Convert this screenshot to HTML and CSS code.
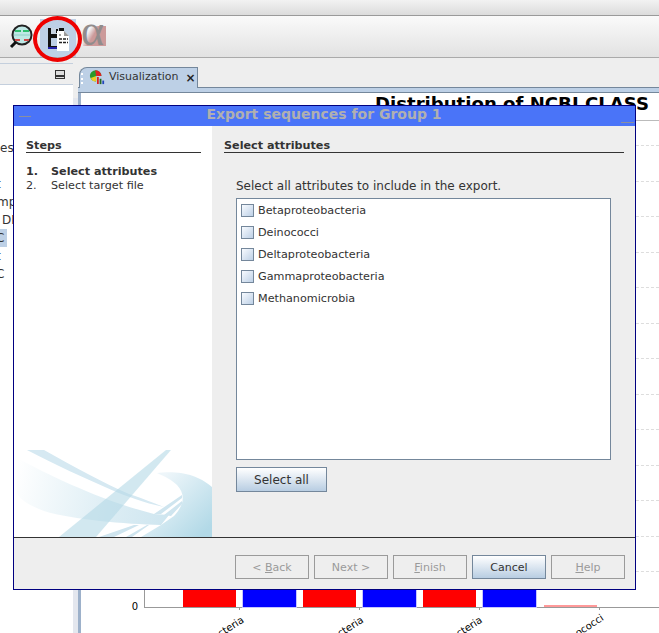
FILE: index.html
```html
<!DOCTYPE html>
<html lang="en">
<head>
  <meta charset="UTF-8">
  <title>Export sequences for Group 1</title>
  <link rel="stylesheet" href="styles.css">
</head>
<body>
  <div class="top-strip"></div>
  <div class="toolbar">
    <button class="tool-btn">
      <svg width="26" height="26" viewBox="0 0 26 26">
        <circle cx="13" cy="10" r="9.500" fill="#bfe9e6" stroke="#222" stroke-width="2"/>
        <path d="M6 6h14" stroke="#2fbf6f" stroke-width="2" stroke-dasharray="6 2"/>
        <path d="M5 10h16" stroke="#8fd0c8" stroke-width="1"/>
        <path d="M6 15h14" stroke="#d04a4a" stroke-width="2" stroke-dasharray="5 4"/>
        <path d="M7 17l-5 5" stroke="#111" stroke-width="3"/>
      </svg>
    </button>
    <button class="tool-btn tool-btn-active">
      <svg width="24" height="26" viewBox="0 0 24 26">
        <path d="M2 1h16v21H2z" fill="#111"/>
        <path d="M5 1h8v6H5z" fill="#c6d3e2"/>
        <path d="M10 2h2v4h-2z" fill="#111"/>
        <path d="M5 11h10v8H5z" fill="#bdd0e6"/>
        <path d="M2 20h14v2H2z" fill="#2222aa"/>
        <path d="M11 4h7l5 5v15H11z" fill="#fff"/>
        <path d="M18 4v5h5z" fill="#9a9a9a"/>
        <path d="M13 8h2" stroke="#444"/>
        <path d="M13 12h9M13 15.500h9" stroke="#222" stroke-width="1.500" stroke-dasharray="3 1"/>
      </svg>
    </button>
    <button class="tool-btn">
      <svg width="26" height="26" viewBox="0 0 26 26">
        <defs>
          <linearGradient id="alpha-bg" x1="0" y1="0" x2="1" y2="0.5">
            <stop offset="0.3" stop-color="#cc9a9a" stop-opacity="0"/>
            <stop offset="0.55" stop-color="#cc9a9a"/>
          </linearGradient>
        </defs>
        <rect x="2" y="1" width="23" height="20" fill="url(#alpha-bg)"/>
        <text x="0" y="20" class="alpha">α</text>
      </svg>
    </button>
  </div>
  <div class="red-ring"></div>

  <div class="workspace">
    <div class="side-panel">
      <div class="panel-head"><span class="min-icon"></span></div>
      <div class="tree">
        <div class="tree-row">es</div>
        <div class="tree-row"></div>
        <div class="tree-row tree-tail">t</div>
        <div class="tree-row tree-mid">mp</div>
        <div class="tree-row tree-dn">DN</div>
        <div class="tree-row tree-sel"><span>C</span></div>
        <div class="tree-row tree-tail">t</div>
        <div class="tree-row tree-tail">C</div>
      </div>
    </div>
    <div class="main-panel">
      <div class="tab-bar">
        <div class="tab">
          <span class="grip"></span>
          <svg width="16" height="16" viewBox="0 0 18 18">
            <path d="M1 8a6.500 6.500 0 0 1 13 0H8v6A6.500 6.500 0 0 1 1 8z" fill="#2a9a2a"/>
            <path d="M7 1.500a6.500 6.500 0 0 1 7 6.500H8z" fill="#d22"/>
            <path d="M2 10l6-2v6a6 6 0 0 1-6-4z" fill="#ec2"/>
            <path d="M9 9h2v8H9z" fill="#d22"/>
            <path d="M12 11h2v6h-2z" fill="#262"/>
            <path d="M15 13h2v4h-2z" fill="#24b"/>
          </svg>
          <span class="tab-label">Visualization</span>
          <span class="tab-close">×</span>
        </div>
      </div>
      <div class="tab-rule"></div>
      <div class="chart">
        <div class="chart-title">Distribution of NCBI CLASS</div>
        <div class="gridlines">
          <div class="gridline"></div><div class="gridline"></div><div class="gridline"></div>
          <div class="gridline"></div><div class="gridline"></div><div class="gridline"></div>
          <div class="gridline"></div><div class="gridline"></div><div class="gridline"></div>
          <div class="gridline"></div><div class="gridline"></div><div class="gridline"></div>
          <div class="gridline"></div>
        </div>
        <div class="chart-foot">
          <div class="y-zero">0</div>
          <div class="plot">
            <div class="bar red"></div><div class="bar blue"></div>
            <div class="bar red"></div><div class="bar blue"></div>
            <div class="bar red"></div><div class="bar blue"></div>
            <div class="bar pink"></div>
          </div>
        </div>
        <div class="x-labels">
          <div class="ticks">
            <span class="tick"></span><span class="tick"></span><span class="tick"></span><span class="tick"></span>
          </div>
          <span class="x-label x-label-1">Betaproteobacteria</span>
          <span class="x-label x-label-2">Deltaproteobacteria</span>
          <span class="x-label x-label-3">Gammaproteobacteria</span>
          <span class="x-label x-label-4">Deinococci</span>
        </div>
      </div>
    </div>
  </div>

  <div class="dialog">
    <div class="dialog-title">
      <span class="title-dash"></span>
      <span class="title-text">Export sequences for Group 1</span>
      <span class="title-dash title-dash-low"></span>
    </div>
    <div class="dialog-body">
      <div class="steps">
        <div class="section-head">Steps</div>
        <ol class="step-list">
          <li class="step step-current"><span class="step-no">1.</span>Select attributes</li>
          <li class="step"><span class="step-no">2.</span>Select target file</li>
        </ol>
        <svg class="swoosh" width="198" height="92" viewBox="0 0 198 92">
          <defs>
            <linearGradient id="fade" gradientUnits="userSpaceOnUse" x1="0" y1="30" x2="198" y2="80">
              <stop offset="0" stop-color="#ffffff"/>
              <stop offset="0.5" stop-color="#dcedf4"/>
              <stop offset="1" stop-color="#c4e0ec"/>
            </linearGradient>
            <linearGradient id="fade-right" gradientUnits="userSpaceOnUse" x1="150" y1="30" x2="198" y2="80">
              <stop offset="0" stop-color="#eef6fa"/>
              <stop offset="1" stop-color="#b2d9e7"/>
            </linearGradient>
          </defs>
          <path d="M3 13C35 30 85 55 140 69L155 70L147 80C110 79 60 75 30 66C15 60 6 55 3 48z" fill="url(#fade)"/>
          <path d="M13 5H30C60 22 90 38 115 49C130 54 140 58 150 62C130 58 110 50 100 46C70 33 40 19 13 5z" fill="#d6e9f2"/>
          <path d="M152 5H157L82 92H45z" fill="#b4d8e6" opacity="0.6"/>
          <path d="M143 28C150 27 160 27 167 28C180 30 190 35 198 42V92H127L147 80L160 71C170 60 172 50 163 40C158 35 150 31 143 28z" fill="url(#fade-right)"/>
          <path d="M85 92L120 80H125L100 92z" fill="#cfe5ef"/>
          <path d="M112 92L133 80H135L118 92z" fill="#cfe5ef"/>
          <path d="M140 69L168 50V53L147 69z" fill="#cfe5ef"/>
          <path d="M150 70L168 56V59L157 71z" fill="#cfe5ef"/>
        </svg>
      </div>
      <div class="step-pane">
        <div class="section-head">Select attributes</div>
        <p class="hint">Select all attributes to include in the export.</p>
        <div class="attr-list">
          <label class="attr"><span class="check"></span>Betaproteobacteria</label>
          <label class="attr"><span class="check"></span>Deinococci</label>
          <label class="attr"><span class="check"></span>Deltaproteobacteria</label>
          <label class="attr"><span class="check"></span>Gammaproteobacteria</label>
          <label class="attr"><span class="check"></span>Methanomicrobia</label>
        </div>
        <button class="btn btn-select-all">Select all</button>
      </div>
    </div>
    <div class="dialog-foot">
      <button class="btn btn-off">&lt; <u>B</u>ack</button>
      <button class="btn btn-off">Next &gt;</button>
      <button class="btn btn-off"><u>F</u>inish</button>
      <button class="btn">Cancel</button>
      <button class="btn btn-off"><u>H</u>elp</button>
    </div>
  </div>
</body>
</html>
```

FILE: styles.css
```css
html, body {
  margin: 0;
  padding: 0;
  width: 659px;
  height: 633px;
  overflow: hidden;
}
body {
  position: relative;
  display: flex;
  flex-direction: column;
  background: #eeeeee;
  color: #333;
  font-family: "DejaVu Sans", sans-serif;
  font-size: 11px;
}
.top-strip {
  height: 15px;
  background: linear-gradient(to bottom, #f2f2f2, #dcdcdc);
  border-bottom: 1px solid #9a9a9a;
}
.toolbar {
  display: flex;
  align-items: flex-start;
  height: 41px;
  padding-left: 4px;
  background: linear-gradient(to bottom, #fafafa, #e2e2e2);
  border-bottom: 1px solid #aaa;
}
.tool-btn {
  display: flex;
  justify-content: center;
  align-items: center;
  width: 36px;
  height: 41px;
  padding: 3px 0 0;
  border: none;
  background: none;
}
.tool-btn svg {
  overflow: visible;
}
.tool-btn-active {
  background: #bdd0e6;
  height: 38px;
  margin-top: 3px;
}
.alpha {
  font-family: "Liberation Serif", serif;
  font-size: 44px;
  fill: #918c8c;
}
.red-ring {
  position: absolute;
  left: 33px;
  top: 16px;
  width: 41px;
  height: 38px;
  border: 4px solid #ee0000;
  border-radius: 50%;
}
.workspace {
  flex: 1;
  display: flex;
  padding-top: 5px;
  min-height: 0;
  background: linear-gradient(to bottom, #eeeeee 40px, #e4e7ee 40px);
}
.side-panel {
  width: 73px;
  background: #fff;
  border-top: 1px solid #c4cfdd;
}
.panel-head {
  display: flex;
  justify-content: flex-end;
  align-items: center;
  height: 20px;
  padding-right: 8px;
  background: #eee;
  border-bottom: 1px solid #c4cfdd;
}
.min-icon {
  width: 8px;
  height: 7px;
  border: 1px solid #333;
  background: linear-gradient(to bottom, #ddd 55%, #333 55%, #333 85%, #ddd 85%);
}
.tree {
  padding-top: 54px;
}
.tree-row {
  height: 18px;
  line-height: 18px;
  font-size: 12px;
  white-space: nowrap;
  overflow: hidden;
}
.tree-tail {
  margin-left: -4px;
}
.tree-mid {
  margin-left: -3px;
}
.tree-dn {
  padding-left: 2px;
}
.tree-sel span {
  display: block;
  width: 7px;
  background: #bdd0e6;
  text-indent: -4px;
  overflow: hidden;
}
.main-panel {
  flex: 1;
  margin-left: 5px;
  display: flex;
  flex-direction: column;
  min-width: 0;
  background: #fff;
  border-left: 3px solid #9db1ca;
}
.tab-bar {
  height: 25px;
  padding-top: 4px;
  box-sizing: border-box;
  margin-left: -3px;
  background: #eee;
  border-bottom: 1px solid #74879b;
}
.tab {
  display: flex;
  align-items: center;
  box-sizing: border-box;
  width: 119px;
  height: 21px;
  margin-left: 1px;
  padding: 0 0 3px 1px;
  background: #bdd0e6;
  border: 1px solid #74879b;
  border-bottom: none;
  border-top-left-radius: 8px;
  font-size: 11px;
}
.grip {
  width: 0;
  height: 11px;
  margin-top: 4px;
  margin-right: 6px;
  border-left: 2px dotted #fff;
}
.tab-label {
  margin-left: 4px;
}
.tab-close {
  margin-left: 7px;
  font-weight: bold;
  font-size: 12px;
  line-height: 12px;
  margin-top: 3px;
  color: #222;
}
.tab-rule {
  height: 4px;
  margin-left: -3px;
  background: #bdd0e6;
  border-bottom: 1px solid #74879b;
}
.chart {
  position: relative;
  flex: 1;
  display: flex;
  flex-direction: column;
  min-height: 0;
}
.chart-title {
  box-sizing: border-box;
  height: 28px;
  margin-left: 63px;
  padding-left: 231px;
  font-size: 18.100px;
  font-weight: bold;
  line-height: 22px;
  color: #000;
  white-space: nowrap;
  border-bottom: 1px solid #bbb;
}
.gridlines {
  position: absolute;
  left: 63px;
  right: 0;
  top: 52px;
}
.gridline {
  box-sizing: border-box;
  height: 35.500px;
  border-top: 1px dashed #ddd;
}
.chart-foot {
  display: flex;
  align-items: flex-end;
  height: 40px;
  margin-top: auto;
  margin-bottom: 25px;
  position: relative;
}
.y-zero {
  width: 57px;
  text-align: right;
  font-size: 10px;
  line-height: 12px;
  color: #000;
  margin-bottom: -5px;
}
.plot {
  flex: 1;
  display: flex;
  align-items: flex-end;
  gap: 7px;
  height: 40px;
  margin-left: 6px;
  padding-left: 38px;
  border-left: 1px solid #999;
  border-bottom: 1px solid #999;
}
.bar {
  width: 53px;
  height: 40px;
  flex: none;
}
.red { background: #ff0000; }
.blue {
  background: #0000ff;
  box-shadow: 0 0 0 1px #c4c4ff;
}
.pink {
  height: 2px;
  background: #ff9999;
  margin-left: 1px;
}
.x-labels {
  position: absolute;
  left: 0;
  right: 0;
  top: 515px;
  bottom: 0;
  overflow: hidden;
}
.ticks {
  display: flex;
  gap: 119px;
  margin-left: 158px;
}
.tick {
  width: 1px;
  height: 2px;
  background: #999;
}
.x-label {
  position: absolute;
  top: 6px;
  white-space: nowrap;
  font-size: 10px;
  color: #000;
  transform: rotate(-33deg);
  transform-origin: right top;
}
.x-label-1 { right: 419px; }
.x-label-2 { right: 300px; }
.x-label-3 { right: 181px; }
.x-label-4 { right: 60px; top: 4px; }
.dialog {
  position: absolute;
  left: 13px;
  top: 105px;
  box-sizing: border-box;
  width: 623px;
  height: 485px;
  display: flex;
  flex-direction: column;
  background: #eeeeee;
  border: 1px solid #000080;
}
.dialog-title {
  display: flex;
  justify-content: space-between;
  align-items: flex-start;
  height: 20px;
  flex: none;
  padding: 0 1px 0 5px;
  background: #4a74f8;
}
.title-dash {
  width: 12px;
  height: 1px;
  margin-top: 10px;
  background: #8a8f9f;
}
.title-dash-low {
  width: 13px;
  margin-top: 16px;
}
.title-text {
  margin-right: 4px;
  line-height: 17px;
  font-size: 14px;
  font-weight: bold;
  color: #b0b0b0;
}
.dialog-body {
  flex: 1;
  display: flex;
  min-height: 0;
  border-bottom: 1px solid #333;
}
.steps {
  position: relative;
  box-sizing: border-box;
  width: 198px;
  padding: 13px 11px 0 12px;
  background: #fff;
  overflow: hidden;
}
.swoosh {
  position: absolute;
  left: 0;
  bottom: 0;
}
.section-head {
  border-bottom: 1px solid #333;
  font-weight: bold;
  line-height: 13px;
  font-size: 11.200px;
}
.step-list {
  list-style: none;
  margin: 12px 0 0;
  padding: 0;
}
.step {
  display: flex;
  line-height: 14px;
  font-size: 11.200px;
}
.step-current {
  font-weight: bold;
}
.step-no {
  width: 25px;
}
.step-pane {
  flex: 1;
  padding: 13px 11px 0 12px;
}
.hint {
  margin: 27px 12px 5px;
  line-height: 13px;
  font-size: 12px;
}
.attr-list {
  box-sizing: border-box;
  width: 375px;
  height: 262px;
  margin: 0 12px;
  background: #fff;
  border: 1px solid #74879b;
}
.attr {
  display: flex;
  align-items: center;
  gap: 4px;
  height: 22px;
  padding-left: 4px;
  font-size: 11.200px;
}
.check {
  box-sizing: border-box;
  width: 13px;
  height: 13px;
  border: 1px solid #74879b;
  background: linear-gradient(135deg, #f8fbff, #bdd0e6);
}
.btn {
  box-sizing: border-box;
  width: 74px;
  height: 24px;
  padding: 0;
  border: 1px solid #74879b;
  background: linear-gradient(to bottom, #fff, #b8cde2);
  color: #333;
  font-family: inherit;
  font-size: 11px;
}
.btn-select-all {
  display: block;
  width: 91px;
  height: 25px;
  margin: 7px 12px 0;
  font-size: 12px;
}
.btn-off {
  border: 1px solid #9a9a9a;
  background: #eee;
  color: #9a9a9a;
}
.dialog-foot {
  display: flex;
  justify-content: flex-end;
  align-items: flex-start;
  gap: 5px;
  height: 51px;
  flex: none;
  box-sizing: border-box;
  padding: 17px 10px 0 0;
}
```
